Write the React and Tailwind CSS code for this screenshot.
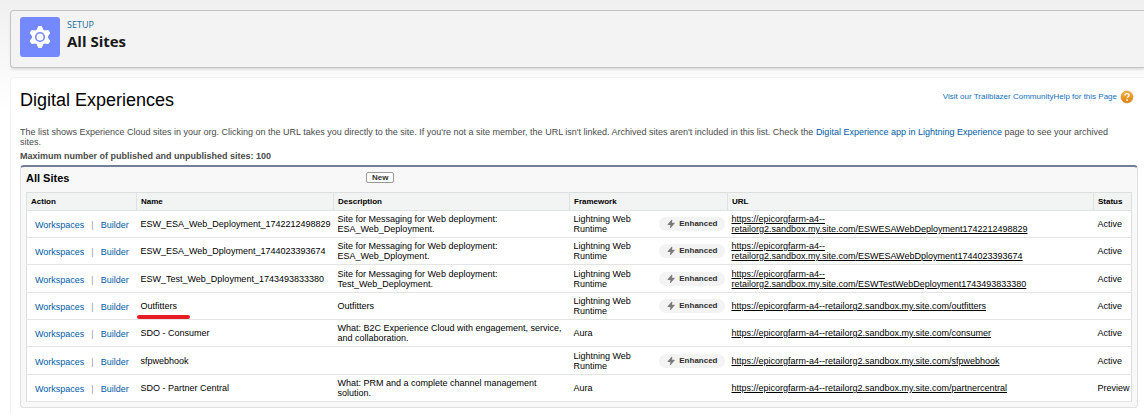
import React from 'react';

const LWR = 'Lightning Web Runtime';
const HOST = 'retailorg2.sandbox.my.site.com';

const sites = [
  { name: 'ESW_ESA_Web_Deployment_1742212498829', description: ['Site for Messaging for Web deployment:', 'ESA_Web_Deployment.'], framework: LWR, path: 'ESWESAWebDeployment1742212498829', wrap: true, status: 'Active' },
  { name: 'ESW_ESA_Web_Dployment_1744023393674', description: ['Site for Messaging for Web deployment:', 'ESA_Web_Dployment.'], framework: LWR, path: 'ESWESAWebDployment1744023393674', wrap: true, status: 'Active' },
  { name: 'ESW_Test_Web_Dployment_1743493833380', description: ['Site for Messaging for Web deployment:', 'Test_Web_Deployment.'], framework: LWR, path: 'ESWTestWebDeployment1743493833380', wrap: true, status: 'Active' },
  { name: 'Outfitters', description: ['Outfitters'], framework: LWR, path: 'outfitters', status: 'Active', marked: true },
  { name: 'SDO - Consumer', description: ['What: B2C Experience Cloud with engagement, service,', 'and collaboration.'], framework: 'Aura', path: 'consumer', status: 'Active' },
  { name: 'sfpwebhook', description: [], framework: LWR, path: 'sfpwebhook', status: 'Active' },
  { name: 'SDO - Partner Central', description: ['What: PRM and a complete channel management', 'solution.'], framework: 'Aura', path: 'partnercentral', status: 'Preview' },
];

const columns = ['Action', 'Name', 'Description', 'Framework', 'URL', 'Status'];
const teeth = [0, 60, 120, 180, 240, 300];

function GearIcon() {
  return (
    <svg viewBox="0 0 24 24" className="size-6" aria-hidden="true">
      <circle cx="12" cy="12" r="7.8" fill="#fff" />
      {teeth.map((angle) => (
        <path
          key={angle}
          d="M9 6 L10.8 2 H13.2 L15 6 Z"
          transform={`rotate(${angle} 12 12)`}
          fill="#fff"
          stroke="#fff"
          strokeWidth="1.8"
          strokeLinejoin="round"
        />
      ))}
      <circle cx="12" cy="12" r="4.3" fill="#fff" stroke="#7389fd" strokeWidth="1.6" />
    </svg>
  );
}

function BoltIcon() {
  return (
    <svg viewBox="0 0 10 10" className="size-2.5" aria-hidden="true">
      <path d="M5.6 0.8 Q6.6 0.6 6.3 1.5 L5.9 3.8 H8.3 Q9 3.9 8.6 4.5 L4.6 9 Q3.8 9.4 4 8.4 L4.4 6 H2 Q1.3 5.9 1.7 5.3 Z" fill="#7a7a7a" />
    </svg>
  );
}

function HelpIcon() {
  return (
    <svg viewBox="0 0 14 14" className="size-3.5" aria-hidden="true">
      <defs>
        <linearGradient id="helpFill" x1="0" y1="0" x2="0" y2="1">
          <stop offset="0" stopColor="#f6b544" />
          <stop offset="1" stopColor="#dc7d0b" />
        </linearGradient>
      </defs>
      <circle cx="7" cy="7" r="6" fill="url(#helpFill)" stroke="#c98a35" strokeWidth="0.6" />
      <path d="M5 5.4 C5 3.1 9 3.1 9 5.4 C9 6.9 7.1 6.8 7.1 8.3" fill="none" stroke="#fff" strokeWidth="1.3" />
      <circle cx="7.1" cy="10.2" r="0.9" fill="#fff" />
    </svg>
  );
}

function SiteRow({ site }) {
  return (
    <tr className="h-[27px] border-b border-[#e4e4e4] nth-[3n]:h-7">
      <td className="pl-2 text-[#015ba7]">
        <div className="flex items-center gap-[7px] pt-0.5">
          <a href="#workspaces" className="hover:underline">Workspaces</a>
          <span className="text-[#999]">|</span>
          <a href="#builder" className="hover:underline">Builder</a>
        </div>
      </td>
      <td className="pl-1">
        <span className="relative whitespace-nowrap">
          {site.name}
          {site.marked && <span className="absolute top-3.5 -left-1 h-1 w-[53px] rounded-full bg-[#e81c23]" />}
        </span>
      </td>
      <td className="pl-1">
        {site.description.map((line) => <div key={line}>{line}</div>)}
      </td>
      <td className="pl-1">
        <div className="flex items-center justify-between pr-[3px]">
          <span className="w-16">{site.framework}</span>
          {site.framework === LWR && (
            <span className="flex h-3.5 items-center gap-[3px] rounded-full bg-[#f3f3f3] px-[7px] text-[8px] font-bold text-[#2e2e2e]">
              <BoltIcon />
              Enhanced
            </span>
          )}
        </div>
      </td>
      <td className="pl-1">
        <a href={'#' + site.path} className="underline">
          https://epicorgfarm-a4--{site.wrap && <br />}{HOST}/{site.path}
        </a>
      </td>
      <td className="pl-1">{site.status}</td>
    </tr>
  );
}

export default function App() {
  return (
    <div className="min-h-screen bg-linear-to-b from-[#f0f0f0] to-white to-[110px] pt-2.5 pl-2.5 font-['Liberation_Sans',Arial,sans-serif] text-black">
      <header className="flex h-[58px] items-start gap-[7px] rounded-l border border-r-0 border-[#c4c4c4] bg-[#f3f3f3] pt-1.5 pl-[9px] shadow-[0_2px_2px_rgba(0,0,0,0.1)]">
        <div className="flex size-10 items-center justify-center rounded-[3px] bg-[#7389fd]">
          <GearIcon />
        </div>
        <div className="font-['Open_Sans','Noto_Sans',sans-serif]">
          <div className="text-[9px] leading-4 text-[#1b6c9c]">SETUP</div>
          <h1 className="text-[15px] leading-4 font-bold text-[#181818]">All Sites</h1>
        </div>
      </header>

      <main className="mt-[9px] rounded-tl border border-r-0 border-b-0 border-[#f0f0f0] bg-white pt-3 pr-1.5 pb-1.5 pl-[9px]">
        <div className="flex items-start justify-between">
          <h2 className="text-lg leading-5">Digital Experiences</h2>
          <div className="flex items-center pr-1 text-[8px] leading-3.5 text-[#1571bd]">
            <a href="#community">Visit our Trailblazer Community</a>
            <a href="#help" className="flex items-center gap-[3px]">
              Help for this Page
              <HelpIcon />
            </a>
          </div>
        </div>

        <p className="mt-[17px] pr-4 text-[9px] leading-2.5 text-[#4a4a4a]">
          The list shows Experience Cloud sites in your org. Clicking on the URL takes you directly to the site. If you're not a site member, the URL isn't linked. Archived sites aren't included in this list. Check the{' '}
          <a href="#app" className="text-[#015ba7]">Digital Experience app in Lightning Experience</a> page to see your archived sites.
        </p>
        <p className="mt-1 text-[9px] leading-2.5 font-bold text-[#4a4a4a]">Maximum number of published and unpublished sites: 100</p>

        <section className="mt-1 rounded border border-t-2 border-[#dfe1e1] border-t-[#747e96] bg-[#f8f8f8] px-[5px] pb-[5px]">
          <div className="flex h-[25px] items-center pb-1">
            <h3 className="w-[340px] text-[11px] leading-3 font-bold">All Sites</h3>
            <button type="button" className="h-[11px] rounded-xs border border-[#999] bg-white px-[5px] text-[8px] leading-2 font-bold text-[#333]">New</button>
          </div>
          <table className="w-full table-fixed border-collapse border border-[#dcdfdf] bg-white text-[9px] leading-2.5">
            <colgroup>
              <col className="w-[110px]" />
              <col className="w-[197px]" />
              <col className="w-[236px]" />
              <col className="w-[158px]" />
              <col />
              <col className="w-[38px]" />
            </colgroup>
            <thead>
              <tr className="h-[18px] border-b border-[#dfe2e2] bg-[#f2f3f3]">
                {columns.map((column) => (
                  <th key={column} scope="col" className="border-l border-[#dfe2e2] pl-1 text-left text-[8px] font-bold">{column}</th>
                ))}
              </tr>
            </thead>
            <tbody>
              {sites.map((site) => <SiteRow key={site.name} site={site} />)}
            </tbody>
          </table>
        </section>
      </main>
    </div>
  );
}
